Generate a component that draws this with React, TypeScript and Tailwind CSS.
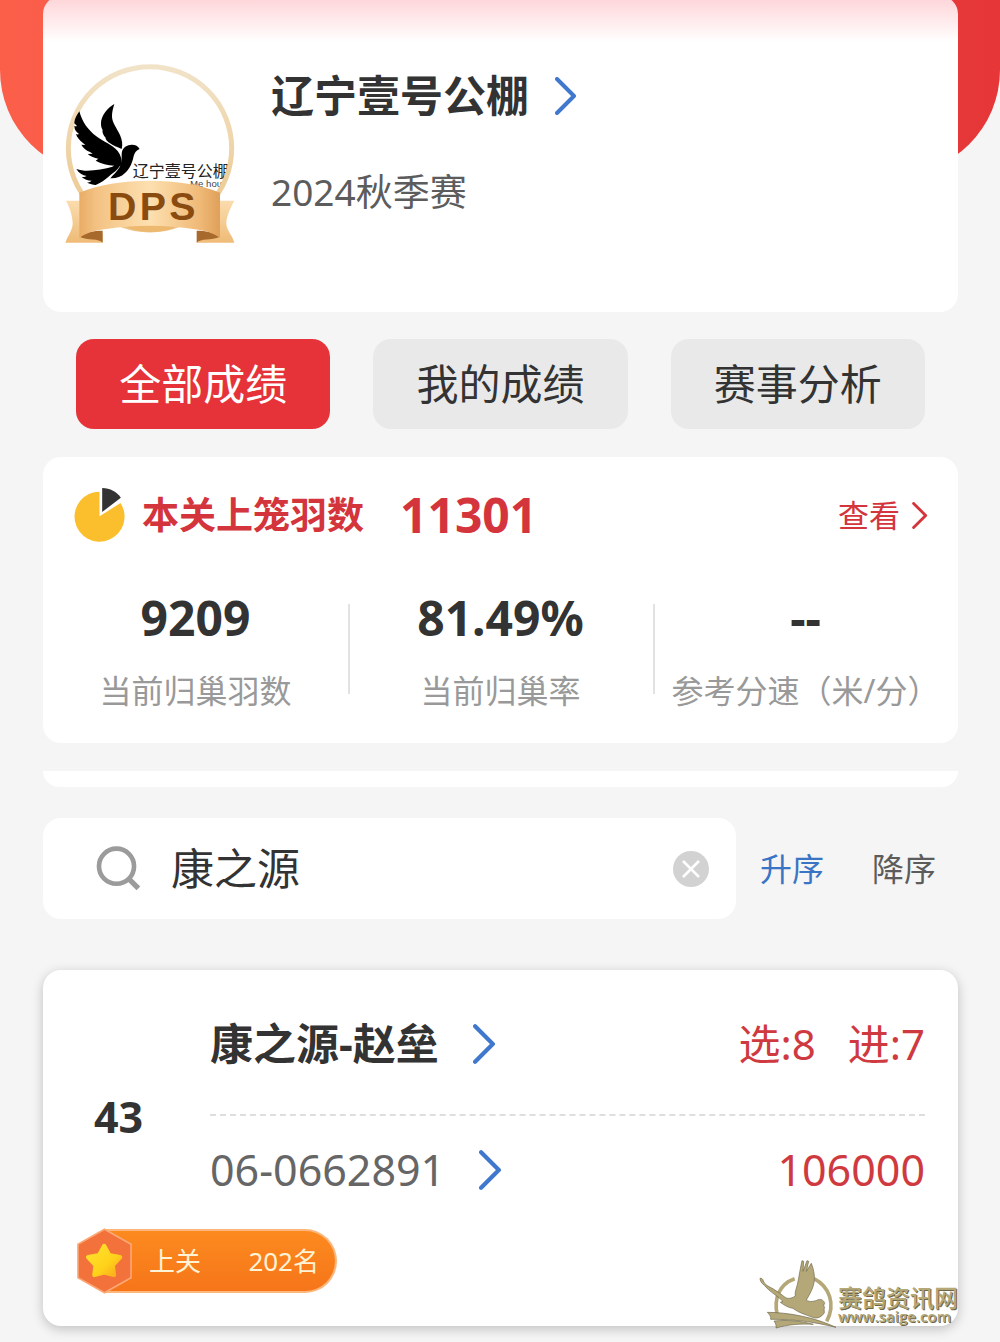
import { useState } from 'react';

interface Stat {
  value: string;
  label: string;
}

const tabs = ['全部成绩', '我的成绩', '赛事分析'];

const stats: Stat[] = [
  { value: '9209', label: '当前归巢羽数' },
  { value: '81.49%', label: '当前归巢率' },
  { value: '--', label: '参考分速（米/分）' },
];

function Chevron({ className }: { className: string }) {
  return (
    <svg viewBox="0 0 22 38" fill="none" stroke="currentColor" className={className}>
      <path d="M2 2l17 17L2 36" strokeWidth="4" strokeLinecap="round" strokeLinejoin="round" />
    </svg>
  );
}

function ClubBadge() {
  return (
    <svg viewBox="66 36 528 552" className="h-[184px] w-44 shrink-0">
      <defs>
        <linearGradient id="ring" x1="0" y1="0" x2="0" y2="1">
          <stop offset="0" stopColor="#f1e3c8" />
          <stop offset="1" stopColor="#ecc588" />
        </linearGradient>
        <linearGradient id="ribbon" x1="0" y1="0" x2="1" y2="0">
          <stop offset="0" stopColor="#e9ac66" />
          <stop offset="0.12" stopColor="#f3c283" />
          <stop offset="0.5" stopColor="#fde0b0" />
          <stop offset="0.85" stopColor="#f0ba78" />
          <stop offset="1" stopColor="#dfa05a" />
        </linearGradient>
        <linearGradient id="tail" x1="0" y1="0" x2="0" y2="1">
          <stop offset="0" stopColor="#fbdcae" />
          <stop offset="1" stopColor="#efbb77" />
        </linearGradient>
        <clipPath id="disc">
          <circle cx="330" cy="295" r="238" />
        </clipPath>
      </defs>
      <circle cx="330" cy="295" r="245" fill="#fff" stroke="url(#ring)" strokeWidth="15" />
      {/* Bird */}
      <path
        fill="#000"
        d="M223 162C205 172 182 196 183 222c0 10 3 14 5 18-2 4 2 16 8 22 0 6 6 14 14 18 8 6 22 12 35 17 4-14 1-28-5-42-9-20-24-36-24-56 0-12 3-24 7-37z"
      />
      <path
        fill="#000"
        d="M118 184c-6 10-14 20-15 36l8 8c-4 2-6 0-8-1 0 12 5 18 14 25-3 2-6 1-9 0 3 10 10 18 20 26l8 7-12-1c5 10 14 17 26 22l8 5-15 1c9 8 20 12 32 14l-8 6c16 9 36 14 56 15l-8 5c12 1 22-2 30-7 1-14-2-30-12-42-16-18-42-28-64-44-24-18-42-42-51-75z"
      />
      <path
        fill="#000"
        d="M299 297c-5-9-16-14-28-12-16 2-26 12-26 28 0 14 0 26-6 38-8 14-20 24-28 34 16 1 32-4 44-16 14-12 20-28 24-42 3-13 6-25 20-30z"
      />
      <path
        fill="#000"
        d="M109 357c18 6 34 6 52 4 26-2 52-8 80-18-4 14-18 24-32 34-14 12-24 20-42 28-8-2-18-3-26-7 6-1 10-3 14-6-12 0-22-4-30-11 6 0 10 0 15-3-12-2-24-9-31-21z"
      />
      <g clipPath="url(#disc)">
        <text x="278" y="381" fontSize="48" fill="#222" className="font-['Noto_Sans_CJK_SC',sans-serif]">
          辽宁壹号公棚
        </text>
        <text x="450" y="412" fontSize="29" fill="#444" className="font-['Liberation_Sans',sans-serif]">
          Me house
        </text>
      </g>
      {/* Ribbon */}
      <path d="M262 534c46 16 94 16 140 0v-24H262z" fill="#edb971" />
      <path
        d="M78 452h46v104l64-4v26H76c10-26 22-38 22-58S90 474 78 452zM583 452h-46v104l-66-4v26h112c-8-26-24-38-24-58s12-46 24-68z"
        fill="url(#tail)"
      />
      <path d="M118 560c20-14 42-18 70-18v36c-12-14-44-6-70-18zM540 560c-20-14-42-18-70-18v36c12-14 44-6 70-18z" fill="#a8692c" />
      <path
        d="M118 428c110-48 312-48 422 0v136c-18-14-44-22-76-26-84-14-188-14-270 0-32 4-58 12-76 26z"
        fill="url(#ribbon)"
      />
      <text
        x="340"
        y="511"
        textAnchor="middle"
        fontSize="118"
        fontWeight="700"
        letterSpacing="10"
        fill="#8a4b10"
        className="font-['Liberation_Sans',sans-serif]"
      >
        DPS
      </text>
    </svg>
  );
}

function RankBadge() {
  return (
    <div className="flex h-[66px] w-[261px] items-center">
      <svg viewBox="46 50 172 204" className="relative -mr-7 h-[66px] w-[57px] shrink-0">
        <defs>
          <linearGradient id="star" x1="0" y1="0" x2="1" y2="1">
            <stop offset="0" stopColor="#ffe22e" />
            <stop offset="0.6" stopColor="#ffd21a" />
            <stop offset="1" stopColor="#fba81e" />
          </linearGradient>
        </defs>
        <path d="M132 54l82 46v104l-82 46-82-46V100z" fill="#f3713b" stroke="#fba877" strokeWidth="5" />
        <path
          d="M131 106l15 28 34 6-23 25 4 30-30-8-30 8 4-30-23-25 34-6z"
          fill="url(#star)"
          stroke="url(#star)"
          strokeWidth="14"
          strokeLinejoin="round"
        />
      </svg>
      <div className="flex h-16 flex-1 items-center justify-between rounded-r-full border-y-2 border-r-2 border-[#fdb67c] bg-linear-to-b from-[#fc8a1f] to-[#f67519] pr-4 pl-11 text-[26px] text-[#fff3d6]">
        <span>上关</span>
        <span>202名</span>
      </div>
    </div>
  );
}

function SiteMark() {
  return (
    <div className="pointer-events-none absolute right-[42px] bottom-3 flex items-end text-[#b5a878]">
      <svg viewBox="50 54 240 216" className="h-[72px] w-20">
        {/* Open ring around the bird */}
        <path
          d="M108 226c-12-50 6-94 52-110M218 116c46 24 66 76 38 128"
          fill="none"
          stroke="currentColor"
          strokeWidth="11"
        />
        <g fill="currentColor" stroke="#6e6649" strokeWidth="2">
          <path d="M56 115c5-1 9 2 10 8 4 12 16 16 30 24 14 8 26 18 38 27 10 3 20 0 28-6-2-10 2-20 6-34 5-22 8-46 14-72l5 2-2 30 12-32 5 2-7 30 15-24c6 16 10 32 9 46 0 22-10 40-24 64 10 8 24 4 36-1 10-3 18 4 19 12-4 4-3 7 0 11-3 6-1 9-1 16-8 14-24 20-38 13-20-8-40-13-56-26-14-2-24-8-38-18l8-3c-18-18-42-30-56-48-9-7-13-14-13-21z" />
          <path d="M78 217c60 0 140 14 206 45-64-16-130-25-196-24 2-8-4-15-10-21z" />
          <path d="M98 243c40-4 80 0 118 10-38-2-76 0-112 11 2-8-2-15-6-21z" />
        </g>
      </svg>
      <div className="flex flex-col pb-1.5 text-shadow-[1px_1px_0_#6e6649]">
        <span className="text-2xl leading-5 font-medium">赛鸽资讯网</span>
        <span className="font-['Open_Sans',sans-serif] text-[15px] leading-4 font-semibold">www.saige.com</span>
      </div>
    </div>
  );
}

export default function App() {
  const [activeTab, setActiveTab] = useState(tabs[0]);
  const [query, setQuery] = useState('康之源');
  const [order, setOrder] = useState<'asc' | 'desc'>('asc');

  return (
    <div className="relative overflow-hidden bg-[#f5f5f5] pr-[42px] pb-4 pl-[43px] font-['Noto_Sans','Noto_Sans_CJK_SC',sans-serif] text-[#333]">
      <div className="absolute inset-x-0 top-0 h-[175px] rounded-b-[105px] bg-linear-to-r from-[#fb5f4a] to-[#e63638]" />

      {/* Club header */}
      <header className="relative -mt-1 flex h-[316px] gap-[33px] rounded-[18px] bg-white bg-linear-to-b from-[#fdd3d7] to-white to-[46px] px-[19px] pt-[66px]">
        <ClubBadge />
        <div>
          <a href="#club" className="flex items-center gap-[26px]">
            <h1 className="text-[43px] leading-[68px] font-bold">辽宁壹号公棚</h1>
            <Chevron className="h-[38px] w-[22px] text-[#3f78cc]" />
          </a>
          <p className="mt-8 text-[37px] leading-[60px] text-[#5c5c5c]">2024秋季赛</p>
        </div>
      </header>

      {/* Tabs */}
      <nav className="mx-[33px] mt-[27px] grid grid-cols-3 gap-[43px]">
        {tabs.map((tab) => (
          <button
            key={tab}
            onClick={() => setActiveTab(tab)}
            className={`h-[90px] rounded-[18px] text-[42px] leading-[60px] ${
              tab === activeTab ? 'bg-[#e63239] text-white' : 'bg-[#e9e9e9] text-[#333]'
            }`}
          >
            {tab}
          </button>
        ))}
      </nav>

      {/* Race summary */}
      <section className="mt-7 rounded-[18px] bg-white pt-7 pb-[25px]">
        <div className="flex items-center px-[30px] text-[#d4343b]">
          <svg viewBox="40 48 158 168" className="h-14 w-[53px]">
            <path d="M119 136V62a75 75 0 1 0 63 34z" fill="#fbbf2d" />
            <path d="M127 123V51c24 1 44 11 56 29z" fill="#333" />
          </svg>
          <h2 className="ml-4 text-[37px] leading-[60px] font-bold">本关上笼羽数</h2>
          <strong className="ml-9 text-5xl leading-[60px] font-bold">11301</strong>
          <a href="#summary" className="ml-auto flex items-center gap-3 text-[31px]">
            查看
            <Chevron className="h-[27px] w-4" />
          </a>
        </div>
        <dl className="mt-[43px] grid grid-cols-3">
          {stats.map((stat, i) => (
            <div key={stat.label} className="relative flex flex-col-reverse items-center">
              <dt className="mt-4 text-[32px] leading-[54px] whitespace-nowrap text-[#999]">{stat.label}</dt>
              <dd className="text-5xl leading-[60px] font-bold">{stat.value}</dd>
              {i > 0 && <span className="absolute top-4 left-0 h-[90px] w-0.5 bg-[#e2e2e2]" />}
            </div>
          ))}
        </dl>
      </section>

      <div className="mt-7 h-4 rounded-b-[18px] bg-white" />

      {/* Search */}
      <form className="mt-[31px] flex items-center" onSubmit={(e) => e.preventDefault()}>
        <div className="flex h-[101px] min-w-0 flex-1 items-center rounded-[18px] bg-white pr-[27px] pl-[53px]">
          <svg viewBox="108 42 136 136" className="size-[45px] shrink-0" fill="none" stroke="#9b9b9b">
            <circle cx="170" cy="103" r="53" strokeWidth="14" />
            <path d="M208 142l28 28" strokeWidth="16" />
          </svg>
          <input
            type="text"
            aria-label="搜索"
            value={query}
            onChange={(e) => setQuery(e.target.value)}
            className="ml-[30px] min-w-0 flex-1 text-[43px] leading-[60px] outline-none"
          />
          <button type="button" aria-label="清除" onClick={() => setQuery('')}>
            <svg viewBox="0 0 36 36" className="size-9">
              <circle cx="18" cy="18" r="18" fill="#d2d2d2" />
              <path d="M10 10l16 16M26 10L10 26" stroke="#fff" strokeWidth="2.5" />
            </svg>
          </button>
        </div>
        <div className="ml-6 flex gap-12 pr-[22px] text-[32px]">
          <button
            type="button"
            onClick={() => setOrder('asc')}
            className={order === 'asc' ? 'text-[#3a74c4]' : 'text-[#5c5c5c]'}
          >
            升序
          </button>
          <button
            type="button"
            onClick={() => setOrder('desc')}
            className={order === 'desc' ? 'text-[#3a74c4]' : 'text-[#5c5c5c]'}
          >
            降序
          </button>
        </div>
      </form>

      {/* Result */}
      <article className="mt-[51px] rounded-[18px] bg-white px-[33px] pt-11 pb-8 shadow-[0_3px_12px_rgba(0,0,0,0.22)]">
        <div className="flex items-center">
          <span className="w-[134px] pt-5 pl-[18px] text-[43px] leading-[60px] font-bold">43</span>
          <div className="flex-1">
            <div className="flex items-center justify-between">
              <a href="#owner" className="flex items-center gap-[34px] text-[43px] leading-[60px] font-bold">
                康之源-赵垒
                <Chevron className="h-10 w-[23px] text-[#3f78cc]" />
              </a>
              <p className="flex gap-8 text-[42px] leading-[60px] text-[#cf3a40]">
                <span>选:8</span>
                <span>进:7</span>
              </p>
            </div>
            <div className="mt-10 mb-6 border-t-2 border-dashed border-[#dedede]" />
            <div className="flex items-center justify-between text-[43px] leading-[60px]">
              <a href="#ring" className="flex items-center gap-[34px] text-[#666]">
                06-0662891
                <Chevron className="h-10 w-[23px] text-[#3f78cc]" />
              </a>
              <span className="text-[#cf3a40]">106000</span>
            </div>
          </div>
        </div>
        <div className="mt-7">
          <RankBadge />
        </div>
      </article>

      <SiteMark />
    </div>
  );
}
